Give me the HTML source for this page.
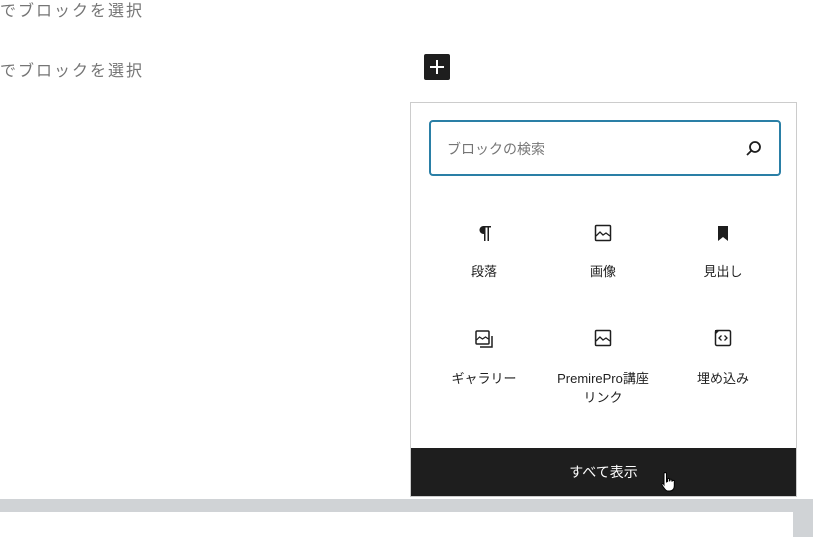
<!DOCTYPE html>
<html><head><meta charset="utf-8"><style>
body{margin:0;width:813px;height:537px;overflow:hidden;background:#fff;font-family:"Liberation Sans","Noto Sans CJK JP",sans-serif;position:relative}
.t{position:absolute;left:0;font-size:16px;color:#757575;letter-spacing:2px;line-height:20px}
.plus{position:absolute;left:424px;top:54px;width:26px;height:26px;background:#1e1e1e;border-radius:2px}
.pop{position:absolute;left:410px;top:102px;width:387px;height:395px;border:1px solid #ccc;background:#fff;box-sizing:border-box}
.search{position:absolute;left:18px;top:17px;width:352px;height:56px;border:2px solid #2a7fa6;border-radius:4px;box-sizing:border-box}
.search span{position:absolute;left:16px;top:17px;font-size:14px;color:#757575}
.item{position:absolute;width:120px;text-align:center;font-size:13px;color:#1e1e1e;line-height:19px}
.item svg{display:block;margin:0 auto 19px}
.btn{position:absolute;left:0;bottom:0;width:385px;height:48px;background:#1e1e1e;color:#fff;font-size:14px;text-align:center;line-height:48px}
.bar{position:absolute;left:0;top:499px;width:813px;height:38px;background:#d0d3d6}
.white{position:absolute;left:0;top:512px;width:793px;height:25px;background:#fff}
</style></head><body>
<div class="t" style="top:2px">でブロックを選択</div>
<div class="t" style="top:62px">でブロックを選択</div>
<div class="plus"><svg width="26" height="26"><path d="M13 6v14M6 13h14" stroke="#fff" stroke-width="2"/></svg></div>
<div class="bar"></div><div class="white"></div>
<div class="pop">
<div class="search"><span>ブロックの検索</span>
<svg style="position:absolute;right:16px;top:17px" width="18" height="18"><circle cx="10" cy="8" r="5" fill="none" stroke="#1e1e1e" stroke-width="1.8"/><path d="M6.5 11.5L2 16" stroke="#1e1e1e" stroke-width="1.8"/></svg></div>
<div class="item" style="left:13px;top:120px"><svg width="20" height="20"><path d="M9 3h8v1.5h-2V18h-1.5V4.5h-2V18H10V11a4 4 0 0 1 -1-8z" fill="#1e1e1e"/></svg>段落</div>
<div class="item" style="left:132px;top:120px"><svg width="20" height="20"><rect x="2.5" y="2.5" width="15" height="15" rx="1" fill="none" stroke="#1e1e1e" stroke-width="1.5"/><path d="M3 13l4-4 3 3 3-2 4 3" fill="none" stroke="#1e1e1e" stroke-width="1.3"/></svg>画像</div>
<div class="item" style="left:252px;top:120px"><svg width="20" height="20"><path d="M5 3h10v15l-5-4-5 4z" fill="#1e1e1e"/></svg>見出し</div>
<div class="item" style="left:13px;top:225px"><svg width="22" height="22"><rect x="3" y="3" width="13" height="13" rx="1" fill="none" stroke="#1e1e1e" stroke-width="1.5"/><path d="M3.5 12l3-3 3 2 3-2 3 2" fill="none" stroke="#1e1e1e" stroke-width="1.2"/><path d="M19 8v11H7" fill="none" stroke="#1e1e1e" stroke-width="1.5"/></svg>ギャラリー</div>
<div class="item" style="left:132px;top:225px"><svg width="20" height="20" style="margin-bottom:21px"><rect x="2.5" y="2.5" width="15" height="15" rx="1" fill="none" stroke="#1e1e1e" stroke-width="1.5"/><path d="M3 13l4-4 3 3 3-2 4 3" fill="none" stroke="#1e1e1e" stroke-width="1.3"/></svg>PremirePro講座<br>リンク</div>
<div class="item" style="left:252px;top:225px"><svg width="20" height="20" style="margin-bottom:21px"><rect x="2.5" y="2.5" width="15" height="15" rx="1.5" fill="none" stroke="#1e1e1e" stroke-width="1.5"/><path d="M2 2h5L2 7z" fill="#1e1e1e"/><path d="M8.5 7.5L6 10l2.5 2.5M11.5 7.5L14 10l-2.5 2.5" fill="none" stroke="#1e1e1e" stroke-width="1.3"/></svg>埋め込み</div>
<div class="btn">すべて表示</div>
</div>
<svg style="position:absolute;left:660px;top:470px" width="20" height="26"><path d="M5 2.5c1 0 1.5.7 1.5 1.5v8l1-.5V9c0-.8 1.8-.8 1.8 0v2l.7-.2v-1c0-.8 1.8-.8 1.8 0v1.3l.7-.1c0-.8 1.8-.8 1.8 0v5c0 3-2 5-4.5 5h-2c-2 0-3-2-4.5-4L2 15c-.5-1 .7-1.8 1.5-1l.5.8V4c0-.8.5-1.5 1-1.5z" fill="#fff" stroke="#000" stroke-width="1"/></svg>
</body></html>
